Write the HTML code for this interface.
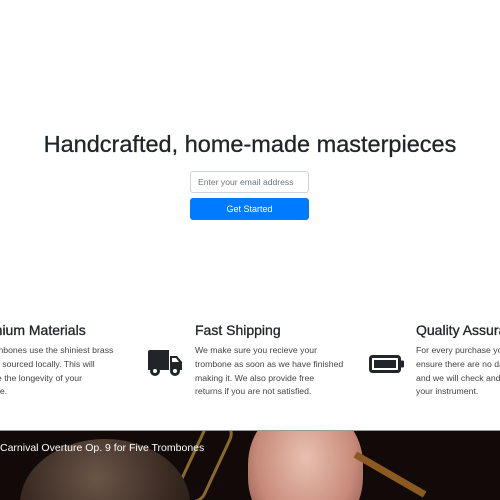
<!DOCTYPE html>
<html><head><style>
*{margin:0;padding:0;box-sizing:border-box}
html,body{width:500px;height:500px;overflow:hidden}
body{background:#fff;font-family:"Liberation Sans",sans-serif;color:#212529;position:relative}
.a{position:absolute}
h1{position:absolute;left:0;width:500px;top:131px;text-align:center;font-size:23.5px;font-weight:400;color:#212529;-webkit-text-stroke:0.3px #212529}
.in{left:190px;top:171px;width:119px;height:22px;border:1px solid #ced4da;border-radius:3px;font-size:8.6px;color:#6c757d;padding:0 7px;line-height:20px;white-space:nowrap;overflow:hidden}
.bt{left:190px;top:198px;width:119px;height:22px;background:#007bff;border-radius:3px;color:#fff;font-size:9px;text-align:center;line-height:22px}
h3{position:absolute;font-size:14px;font-weight:400;color:#212529;top:322px;white-space:nowrap;-webkit-text-stroke:0.3px #212529}
p{position:absolute;font-size:8.7px;line-height:13.8px;color:#444;top:344px;white-space:nowrap}
</style></head><body>
<h1>Handcrafted, home-made masterpieces</h1>
<div class="a in">Enter your email address</div>
<div class="a bt">Get Started</div>

<h3 style="left:-31px">Premium Materials</h3>
<p style="left:-31px">Our trombones use the shiniest brass<br>which is sourced locally. This will<br>increase the longevity of your<br>purchase.</p>

<svg class="a" style="left:148px;top:350px" width="35" height="28" viewBox="0 0 35 28"><path d="M0 2q0-2 2-2h19v20H0z M22 6h7l5 6v8H22z" fill="#212529"/><path d="M24 8h4l3 4h-7z" fill="#fff"/><circle cx="7" cy="21" r="5" fill="#212529"/><circle cx="7" cy="21" r="2" fill="#fff"/><circle cx="27" cy="21" r="5" fill="#212529"/><circle cx="27" cy="21" r="2" fill="#fff"/></svg>
<h3 style="left:195px">Fast Shipping</h3>
<p style="left:195px">We make sure you recieve your<br>trombone as soon as we have finished<br>making it. We also provide free<br>returns if you are not satisfied.</p>

<svg class="a" style="left:369px;top:355px" width="36" height="18" viewBox="0 0 36 18"><rect x="1.5" y="1.5" width="29" height="15" rx="2" fill="none" stroke="#212529" stroke-width="3"/><rect x="5" y="5" width="22" height="8" fill="#212529"/><rect x="31" y="5.5" width="4" height="7" rx="1" fill="#212529"/></svg>
<h3 style="left:416px;width:84px;overflow:hidden">Quality Assurance</h3>
<p style="left:416px;width:84px;overflow:hidden">For every purchase you make,<br>ensure there are no damages<br>and we will check and test<br>your instrument.</p>

<div class="a" style="left:0;top:430px;width:500px;height:1px;background:#999"></div>
<div class="a" style="left:0;top:431px;width:500px;height:69px;background:#120a08;overflow:hidden">
 <div class="a" style="left:190px;top:-15px;width:30px;height:90px;border:3px solid #8a6a2a;border-radius:15px;transform:rotate(25deg)"></div>
 <div class="a" style="left:20px;top:8px;width:170px;height:130px;border-radius:50%;background:radial-gradient(ellipse at 45% 30%,#6a5548,#3a2a22 55%,#1a1210)"></div>
 <div class="a" style="left:248px;top:-25px;width:115px;height:130px;border-radius:45%;background:radial-gradient(ellipse at 50% 40%,#e8c0b0,#c88a7a 60%,#7a4a40)"></div>
 <div class="a" style="left:350px;top:40px;width:80px;height:7px;background:#8a5a22;transform:rotate(30deg)"></div>
 <div class="a" style="left:0;top:11px;font-size:10.5px;color:#fff;white-space:nowrap">Carnival Overture Op. 9 for Five Trombones</div>
</div>
</body></html>
